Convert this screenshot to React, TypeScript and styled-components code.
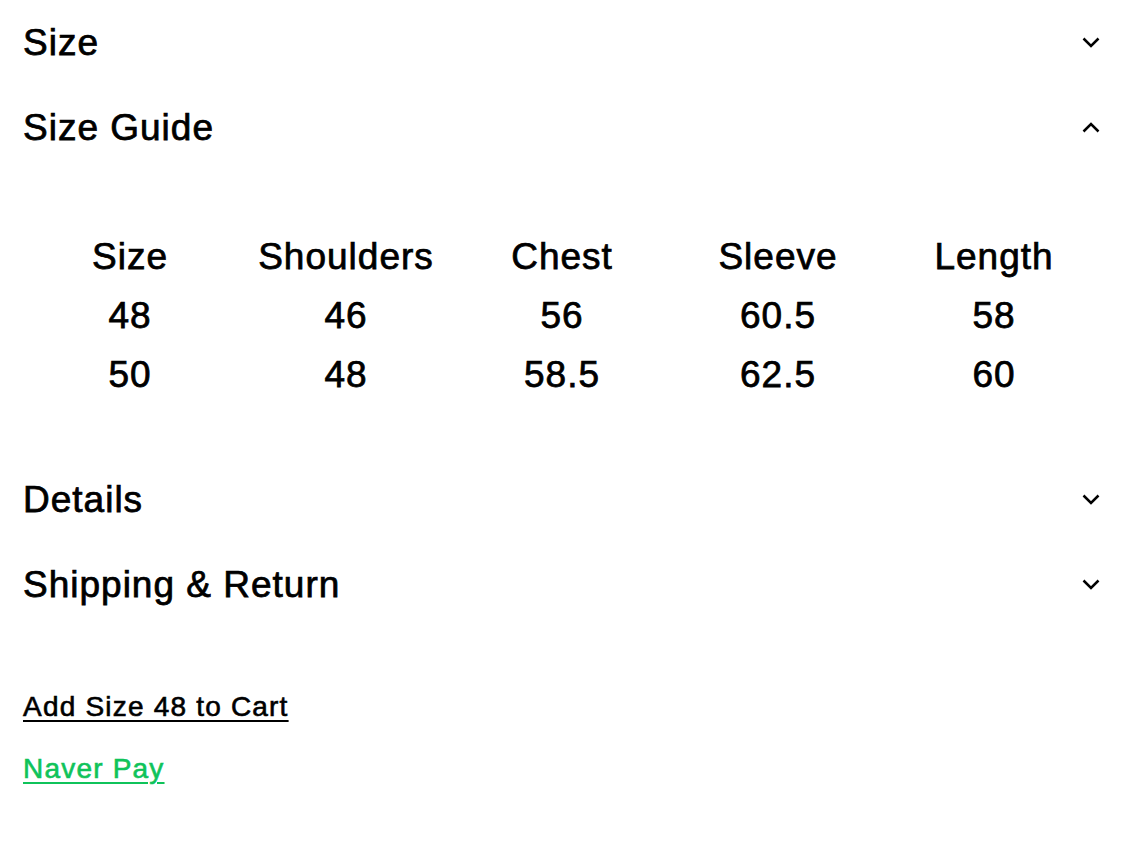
import React from "react";
import styled, { createGlobalStyle } from "styled-components";

const Global = createGlobalStyle`
  html, body { margin: 0; padding: 0; background: #fff; }
  body { font-family: "Liberation Sans", Arial, sans-serif; color: #000; }
`;

const Page = styled.div`
  width: 1125px;
  padding: 0 23px 0 23px;
  box-sizing: border-box;
`;

const Row = styled.div`
  height: 85px;
  display: flex;
  align-items: center;
  justify-content: space-between;
`;

const Title = styled.div`
  font-size: 37px;
  letter-spacing: 1px;
  -webkit-text-stroke: 0.75px #000;
  line-height: 1;
`;

const ChevronBox = styled.div`
  width: 20px;
  height: 12px;
  margin-right: 1px;
  display: flex;
  align-items: center;
  justify-content: center;
`;

const Chevron = ({ up }: { up?: boolean }) => (
  <ChevronBox>
    <svg width="18" height="11" viewBox="0 0 18 11">
      <polyline
        points={up ? "1.5,9.5 9,2 16.5,9.5" : "1.5,1.5 9,9 16.5,1.5"}
        fill="none"
        stroke="#000"
        strokeWidth="2.5"
      />
    </svg>
  </ChevronBox>
);

const Table = styled.div`
  margin-left: -1px;
  width: 1080px;
  padding: 57px 0 53px;
  display: grid;
  grid-template-columns: repeat(5, 1fr);
`;

const Cell = styled.div`
  height: 59px;
  display: flex;
  align-items: center;
  justify-content: center;
  font-size: 37px;
  letter-spacing: 1px;
  -webkit-text-stroke: 0.75px #000;
`;

const Actions = styled.div`
  padding-top: 61px;
  display: flex;
  flex-direction: column;
  align-items: flex-start;
  gap: 24px;
`;

const ActionLink = styled.a<{ $green?: boolean }>`
  font-size: 28px;
  line-height: 38px;
  letter-spacing: 1.2px;
  color: ${(p) => (p.$green ? "#0fc35a" : "#000")};
  -webkit-text-stroke: 0.6px ${(p) => (p.$green ? "#0fc35a" : "#000")};
  text-decoration: underline;
  text-decoration-thickness: 2px;
  text-underline-offset: 4px;
  cursor: pointer;
`;

const headers = ["Size", "Shoulders", "Chest", "Sleeve", "Length"];
const rows = [
  ["48", "46", "56", "60.5", "58"],
  ["50", "48", "58.5", "62.5", "60"],
];

export default function App() {
  return (
    <Page>
      <Global />
      <Row>
        <Title>Size</Title>
        <Chevron />
      </Row>
      <Row>
        <Title>Size Guide</Title>
        <Chevron up />
      </Row>
      <Table>
        {headers.map((h) => (
          <Cell key={h}>{h}</Cell>
        ))}
        {rows.flat().map((v, i) => (
          <Cell key={i}>{v}</Cell>
        ))}
      </Table>
      <Row>
        <Title>Details</Title>
        <Chevron />
      </Row>
      <Row>
        <Title>Shipping &amp; Return</Title>
        <Chevron />
      </Row>
      <Actions>
        <ActionLink>Add Size 48 to Cart</ActionLink>
        <ActionLink $green>Naver Pay</ActionLink>
      </Actions>
    </Page>
  );
}
